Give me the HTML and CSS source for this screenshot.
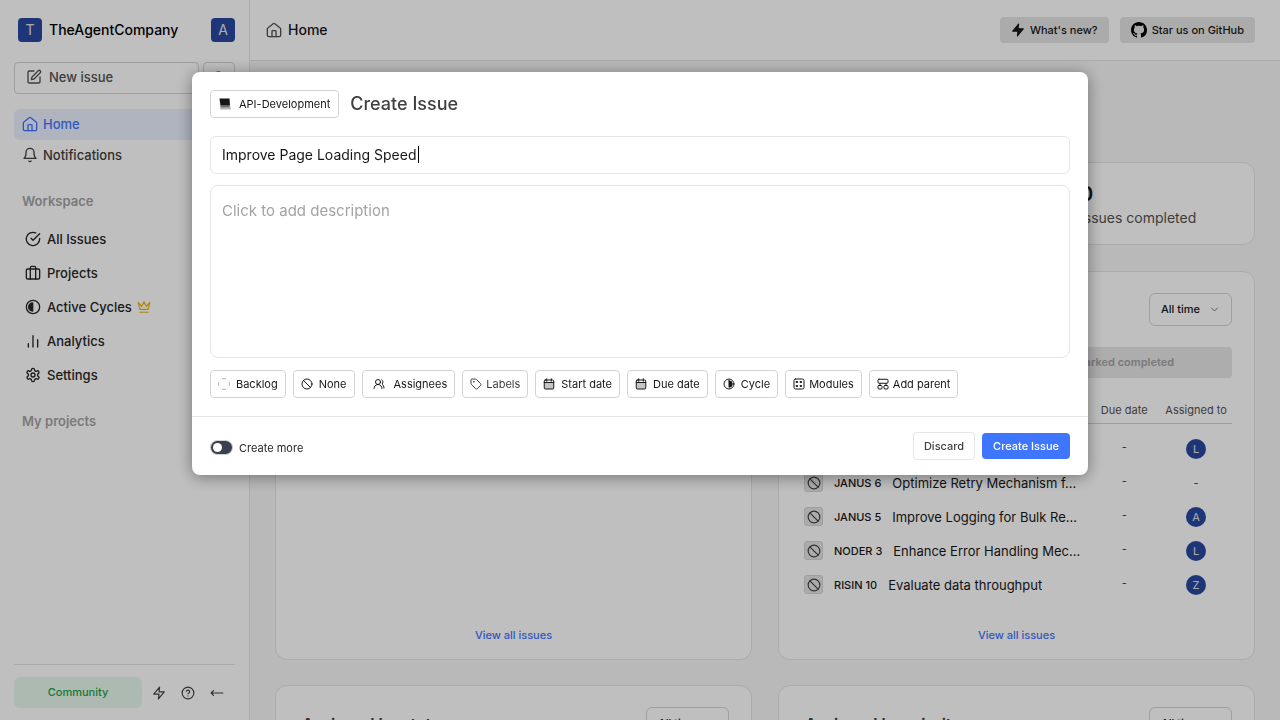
FILE: index.html
```html
<!DOCTYPE html>
<html lang="en">
<head>
<meta charset="utf-8">
<meta name="viewport" content="width=device-width, initial-scale=1">
<title>TheAgentCompany - Home</title>
<link rel="stylesheet" href="styles.css">
</head>
<body>
<svg class="sprite" aria-hidden="true">
  <symbol id="i-home" viewBox="0 0 24 24"><path d="M15 22v-8a1 1 0 0 0-1-1h-4a1 1 0 0 0-1 1v8"/><path d="M2 10.500a2 2 0 0 1 .8-1.600l8-6.400a2 2 0 0 1 2.400 0l8 6.400a2 2 0 0 1 .8 1.600V20a2 2 0 0 1-2 2H4a2 2 0 0 1-2-2z"/></symbol>
  <symbol id="i-edit" viewBox="0 0 24 24"><path d="M12 3H5a2 2 0 0 0-2 2v14a2 2 0 0 0 2 2h14a2 2 0 0 0 2-2v-7"/><path d="M18.400 2.600a2.100 2.100 0 0 1 3 3L12 15l-4 1 1-4z"/></symbol>
  <symbol id="i-search" viewBox="0 0 24 24"><circle cx="11" cy="11" r="8"/><path d="m21 21-4.300-4.300"/></symbol>
  <symbol id="i-bell" viewBox="0 0 24 24"><path d="M6 8a6 6 0 0 1 12 0c0 7 3 9 3 9H3s3-2 3-9"/><path d="M10.300 21a1.940 1.940 0 0 0 3.400 0"/></symbol>
  <symbol id="i-check" viewBox="0 0 24 24"><path d="M22 11.080V12a10 10 0 1 1-5.930-9.140"/><path d="m9 11 3 3L22 4"/></symbol>
  <symbol id="i-case" viewBox="0 0 24 24"><rect x="2" y="6" width="20" height="15" rx="2"/><path d="M8 21V4a2 2 0 0 1 2-2h4a2 2 0 0 1 2 2v17"/></symbol>
  <symbol id="i-cycle" viewBox="0 0 24 24"><circle cx="12" cy="12" r="10"/><path d="M11.500 6v12a6 6 0 0 1 0-12z" fill="currentColor"/></symbol>
  <symbol id="i-cycle-right" viewBox="0 0 24 24"><circle cx="12" cy="12" r="10"/><path d="M12 5.500v13a6.500 6.500 0 0 0 0-13z" fill="currentColor"/></symbol>
  <symbol id="i-crown" viewBox="0 0 24 24"><path d="m2 4 3 12h14l3-12-6 7-4-8-4 8z"/><path d="M5 21h14"/></symbol>
  <symbol id="i-bars" viewBox="0 0 24 24"><path d="M5 21v-5M12 21V4M19 21V10"/></symbol>
  <symbol id="i-gear" viewBox="0 0 24 24"><path d="M12.220 2h-.44a2 2 0 0 0-2 2v.18a2 2 0 0 1-1 1.730l-.43.25a2 2 0 0 1-2 0l-.15-.08a2 2 0 0 0-2.730.730l-.22.38a2 2 0 0 0 .73 2.730l.15.1a2 2 0 0 1 1 1.720v.510a2 2 0 0 1-1 1.740l-.15.090a2 2 0 0 0-.73 2.730l.22.380a2 2 0 0 0 2.730.730l.15-.08a2 2 0 0 1 2 0l.43.250a2 2 0 0 1 1 1.730V20a2 2 0 0 0 2 2h.440a2 2 0 0 0 2-2v-.180a2 2 0 0 1 1-1.730l.43-.250a2 2 0 0 1 2 0l.15.080a2 2 0 0 0 2.730-.730l.22-.390a2 2 0 0 0-.73-2.730l-.15-.080a2 2 0 0 1-1-1.740v-.500a2 2 0 0 1 1-1.740l.15-.090a2 2 0 0 0 .73-2.730l-.22-.380a2 2 0 0 0-2.730-.730l-.15.080a2 2 0 0 1-2 0l-.43-.250a2 2 0 0 1-1-1.730V4a2 2 0 0 0-2-2z"/><circle cx="12" cy="12" r="3"/></symbol>
  <symbol id="i-zap" viewBox="0 0 24 24"><path d="M13 2 3 14h9l-1 8 10-12h-9z"/></symbol>
  <symbol id="i-help" viewBox="0 0 24 24"><circle cx="12" cy="12" r="10"/><path d="M9.090 9a3 3 0 0 1 5.830 1c0 2-3 3-3 3M12 17h.01"/></symbol>
  <symbol id="i-arrow" viewBox="0 0 24 24"><path d="M6 8l-4 4 4 4M2 12h20"/></symbol>
  <symbol id="i-ban" viewBox="0 0 24 24"><circle cx="12" cy="12" r="10"/><path d="m4.900 4.900 14.200 14.200"/></symbol>
  <symbol id="i-chevron" viewBox="0 0 24 24"><path d="m4 8 8 8 8-8"/></symbol>
  <symbol id="i-backlog" viewBox="0 0 24 24"><path d="M8.500 1.500a11 11 0 0 1 7 0M22.500 8.500a11 11 0 0 1 0 7M15.500 22.500a11 11 0 0 1-7 0M1.500 15.500a11 11 0 0 1 0-7"/></symbol>
  <symbol id="i-users" viewBox="0 0 24 24"><path d="M18 21a8 8 0 0 0-16 0"/><circle cx="10" cy="8" r="5"/><path d="M22 20c0-3.370-2-6.500-4-8a5 5 0 0 0-.45-8.300"/></symbol>
  <symbol id="i-tag" viewBox="0 0 24 24"><path d="M12.600 2.600A2 2 0 0 0 11.200 2H4a2 2 0 0 0-2 2v7.200a2 2 0 0 0 .6 1.400l8.700 8.700a2.400 2.400 0 0 0 3.400 0l6.600-6.600a2.400 2.400 0 0 0 0-3.400z"/><circle cx="7.500" cy="7.500" r=".6" fill="currentColor"/></symbol>
  <symbol id="i-date" viewBox="0 0 24 24"><rect x="3" y="9" width="18" height="13" fill="currentColor" fill-opacity=".25" stroke="none"/><rect x="2.500" y="4" width="19" height="18" rx="2"/><path d="M7.500 1.500v5M16.500 1.500v5M2.500 9h19"/></symbol>
  <symbol id="i-modules" viewBox="0 0 24 24"><rect x="2" y="2" width="20" height="20" rx="3"/><path d="M7 7h2v2H7zM15 7h2v2h-2zM7 15h2v2H7zM15 15h2v2h-2z" fill="currentColor"/></symbol>
  <symbol id="i-parent" viewBox="0 0 24 24"><rect x="2" y="2.500" width="20" height="8" rx="2"/><rect x="2" y="15" width="8" height="7" rx="2"/><rect x="14" y="15" width="8" height="7" rx="2"/><path d="M6 15v-4M18 15v-4"/></symbol>
  <symbol id="i-laptop" viewBox="0 0 24 24"><path d="M1 1h20l1 15H3z" fill="#151515" stroke="none"/><path d="M3 15h19l2 8H2z" fill="#b4b4b4" stroke="none"/><path d="M4 17.500h16" stroke="#555" stroke-width="2"/></symbol>
  <symbol id="i-github" viewBox="0 0 16 16"><path fill="currentColor" stroke="none" d="M8 0C3.580 0 0 3.580 0 8c0 3.540 2.290 6.530 5.470 7.590.4.070.55-.17.55-.38 0-.19-.01-.82-.01-1.490-2.010.37-2.530-.49-2.690-.94-.09-.23-.48-.94-.82-1.130-.28-.15-.68-.52-.01-.53.63-.01 1.080.58 1.230.82.72 1.210 1.870.87 2.330.66.07-.52.28-.87.51-1.070-1.780-.2-3.640-.89-3.640-3.950 0-.87.31-1.590.82-2.150-.08-.2-.36-1.020.08-2.120 0 0 .67-.21 2.200.82.64-.18 1.320-.27 2-.27s1.360.09 2 .27c1.530-1.040 2.200-.82 2.200-.82.44 1.100.16 1.920.08 2.120.51.56.82 1.270.82 2.150 0 3.070-1.870 3.750-3.650 3.950.29.25.54.73.54 1.480 0 1.070-.01 1.930-.01 2.200 0 .21.15.46.55.38A8.010 8.010 0 0 0 16 8c0-4.420-3.580-8-8-8z"/></symbol>
</svg>

<div class="app">
  <aside class="sidebar">
    <div class="workspace">
      <span class="square">T</span>
      <span class="workspace-name">TheAgentCompany</span>
      <span class="square">A</span>
    </div>
    <div class="quick">
      <button class="new-issue"><svg class="icon"><use href="#i-edit"/></svg>New issue</button>
      <button class="search" aria-label="Search"><svg class="icon"><use href="#i-search"/></svg></button>
    </div>
    <nav class="menu">
      <a href="#" class="link active"><svg class="icon"><use href="#i-home"/></svg>Home</a>
      <a href="#" class="link"><svg class="icon"><use href="#i-bell"/></svg>Notifications</a>
    </nav>
    <h2 class="group-title">Workspace</h2>
    <nav class="submenu">
      <a href="#" class="link"><svg class="icon"><use href="#i-check"/></svg>All Issues</a>
      <a href="#" class="link"><svg class="icon"><use href="#i-case"/></svg>Projects</a>
      <a href="#" class="link"><svg class="icon"><use href="#i-cycle"/></svg>Active Cycles<svg class="icon crown"><use href="#i-crown"/></svg></a>
      <a href="#" class="link"><svg class="icon"><use href="#i-bars"/></svg>Analytics</a>
      <a href="#" class="link"><svg class="icon"><use href="#i-gear"/></svg>Settings</a>
    </nav>
    <h2 class="group-title">My projects</h2>
    <div class="sidebar-footer">
      <button class="community">Community</button>
      <div class="tools">
        <button class="tool" aria-label="Shortcuts"><svg class="icon"><use href="#i-zap"/></svg></button>
        <button class="tool" aria-label="Help"><svg class="icon"><use href="#i-help"/></svg></button>
        <button class="tool" aria-label="Collapse sidebar"><svg class="icon"><use href="#i-arrow"/></svg></button>
      </div>
    </div>
  </aside>

  <div class="page">
    <header class="topbar">
      <h1 class="crumb"><svg class="icon"><use href="#i-home"/></svg>Home</h1>
      <div class="top-actions">
        <a href="#" class="top-button"><svg class="icon bolt"><use href="#i-zap"/></svg>What's new?</a>
        <a href="#" class="top-button"><svg class="icon github"><use href="#i-github"/></svg>Star us on GitHub</a>
      </div>
    </header>
    <main class="content">
      <section class="card stats">
        <div class="stat"><strong>0</strong><span>Issues completed</span></div>
      </section>
      <div class="widgets">
        <section class="card widget">
          <a href="#" class="view-all">View all issues</a>
        </section>
        <section class="card widget">
          <div class="widget-head">
            <div class="picker"><select aria-label="Period"><option>All time</option></select><svg class="icon"><use href="#i-chevron"/></svg></div>
          </div>
          <div class="tabs"><button class="tab" disabled>Marked completed</button></div>
          <table class="issues">
            <thead><tr><th class="col-issue" aria-label="Issue"></th><th>Due date</th><th>Assigned to</th></tr></thead>
            <tbody>
              <tr><td></td><td>-</td><td><span class="avatar">L</span></td></tr>
              <tr><td><div class="issue"><span class="priority"><svg class="icon"><use href="#i-ban"/></svg></span><span class="key">JANUS 6</span><span class="name">Optimize Retry Mechanism f...</span></div></td><td>-</td><td>-</td></tr>
              <tr><td><div class="issue"><span class="priority"><svg class="icon"><use href="#i-ban"/></svg></span><span class="key">JANUS 5</span><span class="name">Improve Logging for Bulk Re...</span></div></td><td>-</td><td><span class="avatar">A</span></td></tr>
              <tr><td><div class="issue"><span class="priority"><svg class="icon"><use href="#i-ban"/></svg></span><span class="key">NODER 3</span><span class="name">Enhance Error Handling Mec...</span></div></td><td>-</td><td><span class="avatar">L</span></td></tr>
              <tr><td><div class="issue"><span class="priority"><svg class="icon"><use href="#i-ban"/></svg></span><span class="key">RISIN 10</span><span class="name">Evaluate data throughput</span></div></td><td>-</td><td><span class="avatar">Z</span></td></tr>
            </tbody>
          </table>
          <a href="#" class="view-all">View all issues</a>
        </section>
        <section class="card widget">
          <div class="widget-head"><h2 class="widget-title">Assigned by state</h2>
            <div class="picker"><select aria-label="Period"><option>All time</option></select><svg class="icon"><use href="#i-chevron"/></svg></div>
          </div>
        </section>
        <section class="card widget">
          <div class="widget-head"><h2 class="widget-title">Assigned by priority</h2>
            <div class="picker"><select aria-label="Period"><option>All time</option></select><svg class="icon"><use href="#i-chevron"/></svg></div>
          </div>
        </section>
      </div>
    </main>
  </div>
</div>

<div class="backdrop">
  <form class="modal" role="dialog" aria-labelledby="modal-title">
    <div class="modal-body">
      <div class="modal-head">
        <button type="button" class="chip project"><svg class="icon"><use href="#i-laptop"/></svg>API-Development</button>
        <h2 class="modal-title" id="modal-title">Create Issue</h2>
      </div>
      <div class="title-field">
        <input class="field" type="text" aria-label="Title" value="Improve Page Loading Speed">
        <span class="caret"></span>
      </div>
      <textarea class="field description" aria-label="Description" placeholder="Click to add description"></textarea>
      <div class="chips">
        <button type="button" class="chip"><svg class="icon muted"><use href="#i-backlog"/></svg>Backlog</button>
        <button type="button" class="chip"><svg class="icon"><use href="#i-ban"/></svg>None</button>
        <button type="button" class="chip wide"><svg class="icon"><use href="#i-users"/></svg>Assignees</button>
        <button type="button" class="chip labels"><svg class="icon"><use href="#i-tag"/></svg>Labels</button>
        <button type="button" class="chip"><svg class="icon"><use href="#i-date"/></svg>Start date</button>
        <button type="button" class="chip"><svg class="icon"><use href="#i-date"/></svg>Due date</button>
        <button type="button" class="chip"><svg class="icon bold"><use href="#i-cycle-right"/></svg>Cycle</button>
        <button type="button" class="chip tight"><svg class="icon bold"><use href="#i-modules"/></svg>Modules</button>
        <button type="button" class="chip tight"><svg class="icon bold"><use href="#i-parent"/></svg>Add parent</button>
      </div>
    </div>
    <div class="modal-footer">
      <label class="more"><input type="checkbox" class="switch" role="switch">Create more</label>
      <button type="button" class="button">Discard</button>
      <button type="submit" class="button primary">Create Issue</button>
    </div>
  </form>
</div>
</body>
</html>
```
FILE: styles.css
```css
* { box-sizing: border-box; }

body {
  margin: 0;
  height: 100vh;
  overflow: hidden;
  font-family: Inter, "Liberation Sans", sans-serif;
  font-size: 13px;
  line-height: 18px;
  color: #171717;
}

h1, h2 { margin: 0; font-weight: 500; }
a { color: inherit; text-decoration: none; }
button, input, select, textarea { font: inherit; color: inherit; }
button { background: none; border: 0; padding: 0; }

.sprite { position: absolute; width: 0; height: 0; }
.icon {
  width: 16px;
  height: 16px;
  flex: none;
  fill: none;
  stroke: currentColor;
  stroke-width: 2;
  stroke-linecap: round;
  stroke-linejoin: round;
}

.app { display: flex; height: 100%; }

/* Sidebar */
.sidebar {
  display: flex;
  flex-direction: column;
  width: 250px;
  flex: none;
  padding: 18px 14px 12px;
  border-right: 1px solid #e5e5e5;
}
.workspace { display: flex; align-items: center; gap: 7px; padding-left: 4px; }
.workspace-name { flex: 1; font-size: 14px; font-weight: 500; color: #000; }
.square {
  width: 24px;
  height: 24px;
  border-radius: 4px;
  background: #2849a1;
  color: #e5e5e5;
  font-size: 14px;
  line-height: 24px;
  text-align: center;
}
.quick { display: flex; gap: 4px; margin-top: 20px; }
.new-issue, .search {
  display: flex;
  align-items: center;
  height: 32px;
  border: 1px solid #d4d4d4;
  border-radius: 4px;
  color: #525252;
}
.new-issue { flex: 1; gap: 7px; padding: 0 11px 2px; font-weight: 500; }
.search { width: 32px; justify-content: center; }
.menu { margin-top: 15px; }
.link { display: flex; align-items: center; gap: 6px; font-weight: 500; color: #404040; }
.menu .link { height: 31px; padding: 0 8px 2px; gap: 5px; border-radius: 6px; }
.menu .active { background: #ebf0ff; color: #3f76ff; }
.group-title { margin: 21px 8px 0; font-size: 13px; font-weight: 600; color: #a3a3a3; }
.submenu { margin: 12px 0 4px; }
.submenu + .group-title { margin-top: 16px; }
.submenu .link { height: 34px; padding: 0 11px; color: #262626; }
.crown { width: 14px; height: 14px; margin-left: -1px; color: #eab308; }
.sidebar-footer {
  display: flex;
  align-items: center;
  gap: 2px;
  margin-top: auto;
  padding-top: 12px;
  border-top: 1px solid #e5e5e5;
}
.community {
  flex: 1;
  height: 31px;
  padding-bottom: 1px;
  border-radius: 6px;
  background: #e7f8ed;
  color: #16a34a;
  font-size: 11px;
  font-weight: 500;
}
.tools { display: flex; padding-right: 4px; }
.tool { display: flex; justify-content: center; width: 29px; color: #404040; }
.tool .icon { width: 14px; height: 14px; }

/* Page */
.page { flex: 1; min-width: 0; display: flex; flex-direction: column; }
.topbar {
  display: flex;
  align-items: center;
  justify-content: space-between;
  height: 61px;
  flex: none;
  padding: 0 25px 0 16px;
  border-bottom: 1px solid #e5e5e5;
}
.crumb { display: flex; align-items: center; gap: 6px; font-size: 14px; }
.crumb .icon { color: #525252; }
.top-actions { display: flex; gap: 11px; }
.top-button {
  display: flex;
  align-items: center;
  gap: 5px;
  height: 26px;
  padding: 0 11px;
  border-radius: 4px;
  background: #e5e5e5;
  font-size: 11px;
  font-weight: 500;
}
.bolt { width: 14px; height: 14px; }
.bolt use { fill: currentColor; }
.github { color: #000; }

.content { flex: 1; overflow: hidden; padding: 101px 25px 0; background: #f7f7f7; }
.card { border: 1px solid #e5e5e5; border-radius: 12px; background: #fff; }
.stats { display: flex; justify-content: flex-end; height: 83px; }
.stat { display: flex; flex-direction: column; width: 174px; padding-top: 18px; }
.stat strong { font-size: 20px; font-weight: 600; line-height: 26px; }
.stat span { font-size: 14px; line-height: 22px; color: #525252; }

.widgets {
  display: grid;
  grid-template-columns: 1fr 1fr;
  gap: 25px 26px;
  margin-top: 26px;
}
.widget { display: flex; flex-direction: column; min-height: 389px; padding: 21px 22px 15px; }
.widget-head { display: flex; align-items: center; justify-content: flex-end; height: 33px; }
.widget-title { flex: 1; padding-left: 4px; font-size: 16px; font-weight: 600; color: #404040; }
.picker { position: relative; color: #525252; }
.picker select {
  appearance: none;
  height: 33px;
  padding: 0 30px 2px 11px;
  border: 1px solid #d4d4d4;
  border-radius: 6px;
  background: none;
  color: #171717;
  font-size: 11px;
  font-weight: 500;
}
.picker .icon { position: absolute; right: 13px; top: 12px; width: 9px; height: 9px; }
.tabs { display: grid; grid-template-columns: 1fr 1fr; margin-top: 21px; border-radius: 4px; background: #e7e7e7; }
.tab {
  grid-column: 2;
  height: 31px;
  padding-bottom: 2px;
  color: #a3a3a3;
  font-size: 11px;
  font-weight: 600;
}
.issues { width: 100%; margin-top: 18px; border-collapse: collapse; table-layout: fixed; text-align: center; }
.issues th {
  height: 27px;
  padding: 1px 0 0;
  border-bottom: 1px solid #d4d4d4;
  color: #525252;
  font-size: 11px;
  font-weight: 400;
  white-space: nowrap;
}
.col-issue { width: 66.670%; }
.issues td { height: 34px; padding: 0; font-size: 11px; color: #404040; }
.issues tbody::before { content: ""; display: block; height: 8px; }
.issues td:nth-child(2) { padding-bottom: 4px; }
.issue { display: flex; align-items: center; gap: 11px; padding: 0 3px; color: #171717; }
.priority {
  display: grid;
  place-items: center;
  width: 19px;
  height: 19px;
  flex: none;
  border: 1px solid #d4d4d4;
  border-radius: 3px;
  background: #e5e5e5;
  color: #404040;
}
.priority .icon { width: 14px; height: 14px; }
.key { flex: none; font-size: 11px; font-weight: 500; }
.name { overflow: hidden; text-align: left; text-overflow: ellipsis; white-space: nowrap; font-size: 13px; }
.avatar {
  display: inline-block;
  width: 20px;
  height: 20px;
  border-radius: 50%;
  background: #2849a1;
  color: #e5e5e5;
  line-height: 20px;
  vertical-align: middle;
}
.view-all { align-self: center; margin-top: auto; font-size: 11px; font-weight: 500; color: #3f76ff; }

/* Create issue dialog */
.backdrop {
  position: fixed;
  inset: 0;
  padding: 72px 20px;
  background: rgba(0, 0, 0, 0.250);
}
.modal {
  max-width: 896px;
  margin: 0 auto;
  border-radius: 8px;
  background: #fff;
  box-shadow: 0 2px 16px rgba(0, 0, 0, 0.400);
}
.modal-body { display: flex; flex-direction: column; padding: 18px; }
.modal-head { display: flex; align-items: center; gap: 11px; }
.modal-title { font-size: 18px; line-height: 28px; color: #404040; }
.title-field { position: relative; display: flex; margin: 18px 0 11px; }
.field {
  width: 100%;
  height: 38px;
  padding: 0 11px 2px;
  border: 1px solid #e5e5e5;
  border-radius: 6px;
  background: none;
  font-size: 14px;
  outline: 0;
}
.caret { position: absolute; left: 208px; top: 10px; width: 1px; height: 17px; background: #000; }
.description { height: 173px; padding: 14px 11px; border-radius: 8px; font-size: 15px; line-height: 22px; resize: none; }
.description::placeholder { color: #a3a3a3; }
.chips { display: flex; flex-wrap: wrap; gap: 7px; margin-top: 12px; }
.chip {
  display: flex;
  align-items: center;
  gap: 6px;
  height: 28px;
  padding: 0 7px 1px;
  border: 1px solid #d4d4d4;
  border-radius: 4px;
  font-size: 11px;
}
.chip .icon { width: 12px; height: 12px; stroke-width: 2; }
.chip .muted { color: #737373; stroke-width: 1; }
.project { gap: 8px; padding: 0 8px 1px; }
.wide { gap: 9px; padding-left: 10px; }
.tight, .labels { gap: 4px; }
.labels { color: #404040; }
.modal-footer {
  display: flex;
  align-items: center;
  gap: 7px;
  padding: 15px 18px;
  border-top: 1px solid #e5e5e5;
  font-size: 11px;
}
.more { display: flex; align-items: center; gap: 6px; margin-right: auto; padding-top: 3px; color: #262626; }
.switch {
  appearance: none;
  width: 23px;
  height: 15px;
  margin: 0;
  padding: 2px;
  border: 1px solid #d4d4d4;
  border-radius: 8px;
  background: #374151;
}
.switch::before { content: ""; display: block; width: 9px; height: 9px; border-radius: 50%; background: #fff; }
.button {
  height: 28px;
  padding: 0 10px 1px;
  border: 1px solid #e5e5e5;
  border-radius: 4px;
  font-weight: 500;
  color: #404040;
}
.primary { height: 26px; padding: 0 11px 1px; border: 0; background: #3f76ff; color: #fff; }
```
